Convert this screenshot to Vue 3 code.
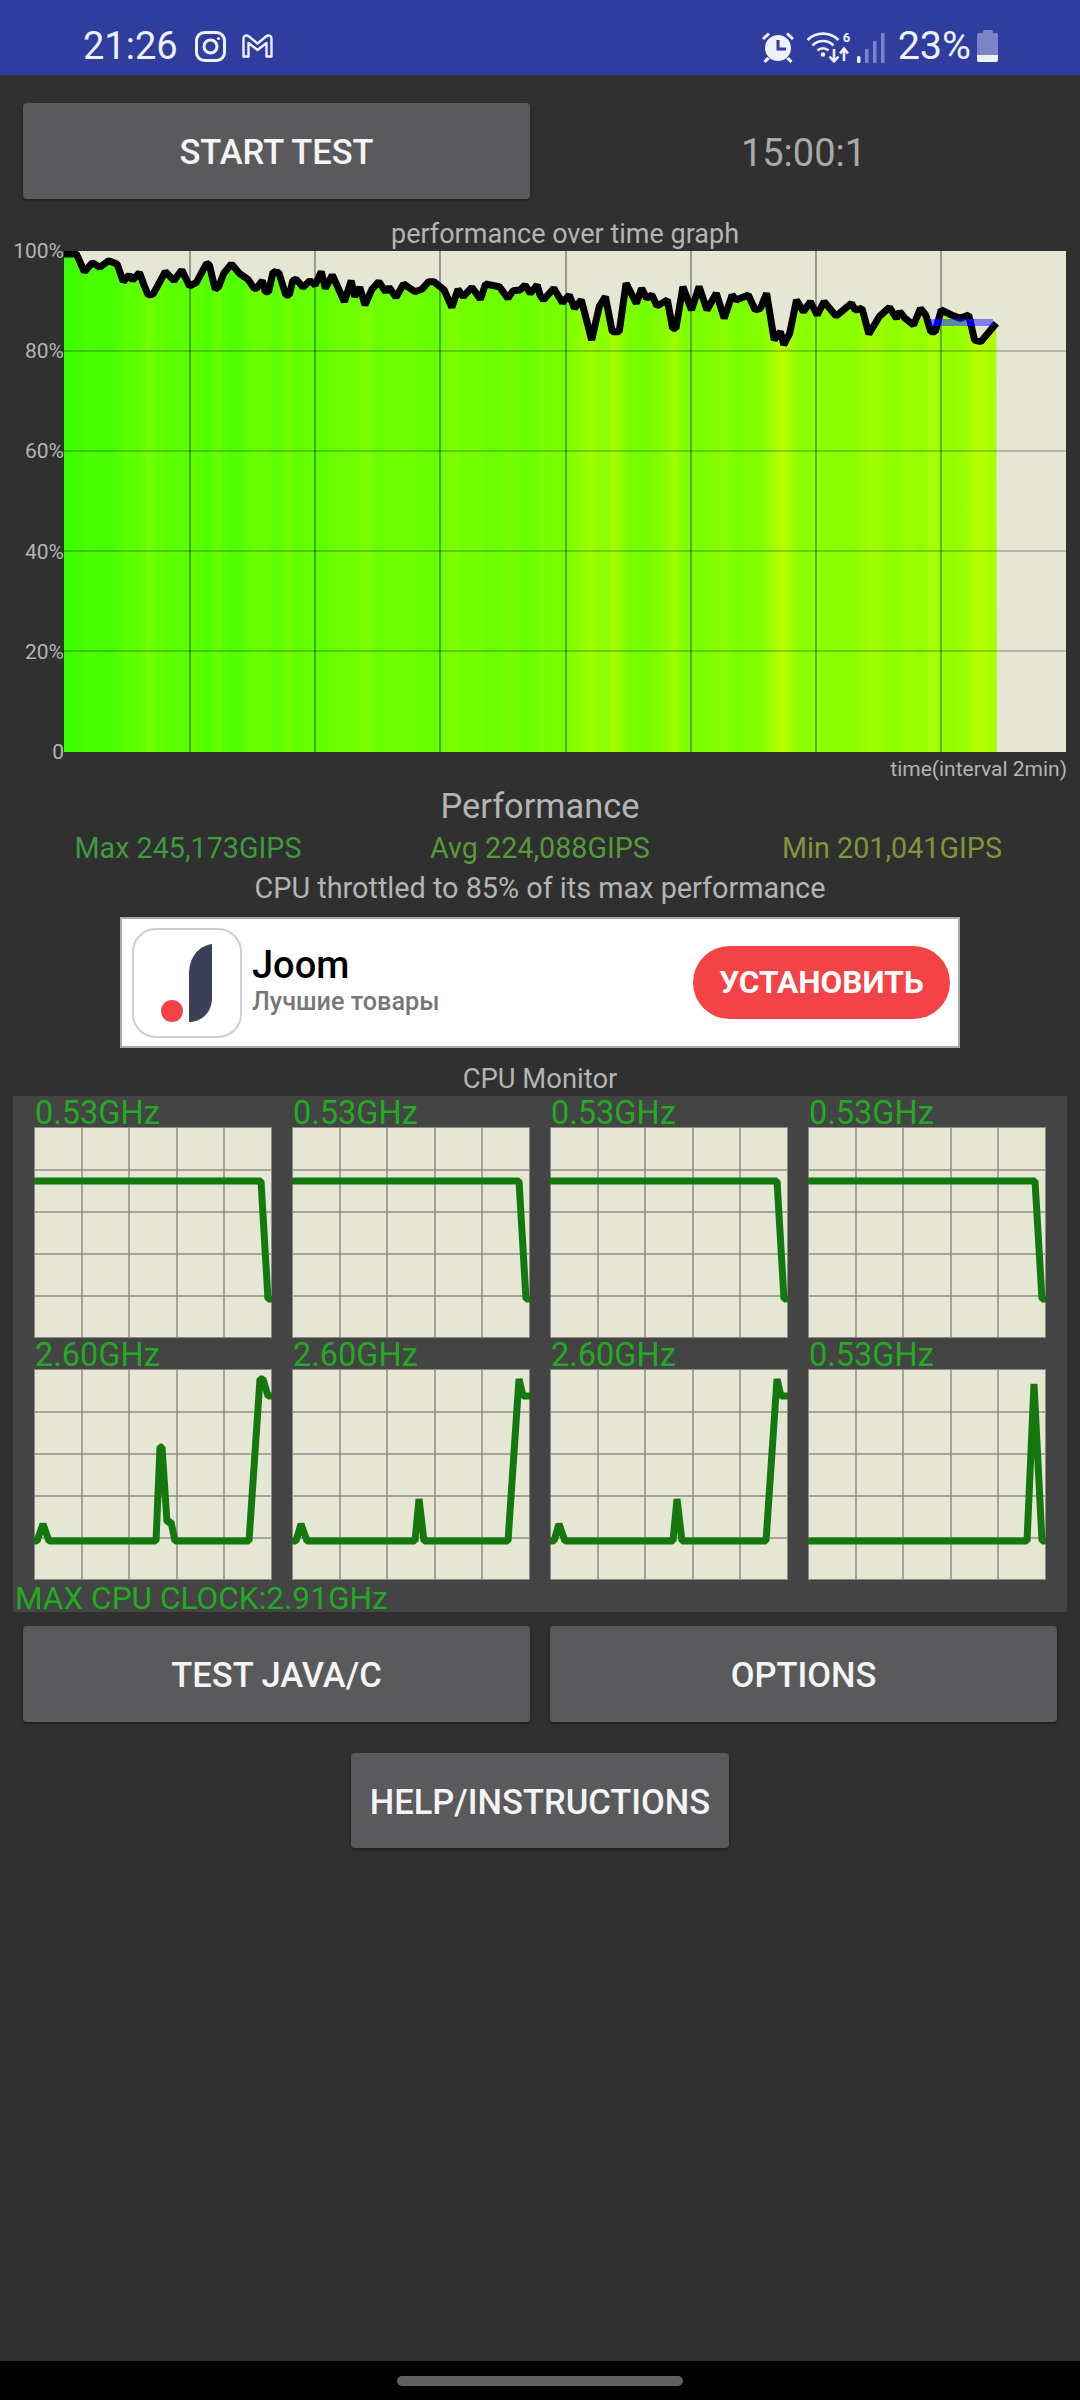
<script setup>
const leftPart = [[186,72],[222,72],[245,125],[268,98],[290,112],[315,92],[340,102],[358,155],[375,135],[385,150],[405,128],[420,170],[430,195],[445,192],[480,125],[505,152],[528,120],[550,168],[570,158],[600,100],[608,105],[625,178],[635,170],[650,130],[672,102],[695,130],[720,148],[738,175],[745,175],[762,152],[770,185],[780,185],[793,125],[810,128],[830,195],[840,195],[850,152],[860,148],[880,172],[900,152],[915,165],[933,125],[945,175],[965,135],[1000,215],[1020,152],[1030,200],[1045,172],[1060,225],[1080,178],[1100,155],[1120,185],[1130,172],[1150,202],[1172,162],[1205,185],[1225,178],[1245,155],[1260,155],[1290,180],[1312,232],[1330,178],[1345,200],[1370,172],[1395,208],[1410,162],[1450,170],[1475,205],[1490,182],[1510,180],[1525,165],[1540,190],[1560,165]]
const rightPart = [[0,195],[10,210],[40,175],[65,218],[85,195],[100,235],[120,210],[150,330],[172,230],[190,200],[210,305],[230,305],[250,160],[280,220],[295,175],[310,205],[325,195],[340,228],[370,210],[385,295],[395,295],[415,170],[440,240],[462,170],[485,240],[512,190],[535,265],[558,195],[570,210],[605,195],[625,240],[640,235],[658,190],[680,330],[698,305],[708,345],[725,310],[745,210],[765,245],[785,215],[805,255],[825,215],[860,258],[905,220],[915,240],[935,235],[955,312],[985,260],[1015,232],[1035,265],[1045,245],[1060,265],[1085,285],[1105,235],[1120,255],[1135,305],[1148,305],[1165,240],[1195,255],[1220,265],[1245,255],[1262,330],[1280,335],[1325,280]]

const perf = [
  ...leftPart.map(([x, y]) => [x / 2.904 - 64, y / 3 - 21]),
  ...rightPart.map(([x, y]) => [x / 2.904 + 476, y / 3 - 21])
]
const toPath = (pts) => pts.map(([x, y], i) => (i ? "L" : "M") + x.toFixed(1) + " " + y.toFixed(1)).join(" ")

const perfLine = toPath(perf)
const perfArea = perfLine + " L933 501 L0 501 Z"
// the lower the run drops, the yellower its band (partly averaged with neighbours, the bands are soft)
const bands = perf.map(([x, y], i) => {
  const prev = perf[Math.max(0, i - 1)][1]
  const next = perf[Math.min(perf.length - 1, i + 1)][1]
  const soft = (prev + 2 * y + next) / 4
  return {
    offset: (x / 933).toFixed(4),
    color: `rgb(${Math.round(Math.min(195, 52 + soft * 1.5))},255,0)`
  }
})

const gridX = [126, 251, 376, 502, 627, 752, 877]
const gridY = [100, 200, 300, 400]
const axisLabels = ["100%", "80%", "60%", "40%", "20%", "0"]

const flat = [[0,54],[227,54],[234,172],[238,172]]
const bigSpike = [[0,172],[3,172],[9,155],[15,172],[122,172],[126,78],[128,78],[133,153],[137,153],[141,172],[215,172],[226,10],[229,10],[234,27],[238,27]]
const smallSpike = [[0,172],[4,172],[9,155],[15,172],[123,172],[127,130],[132,172],[216,172],[227,10],[231,27],[238,27]]
const lateSpike = [[0,172],[219,172],[226,15],[234,172],[238,172]]

const cores = [
  { clock: "0.53GHz", d: toPath(flat) },
  { clock: "0.53GHz", d: toPath(flat) },
  { clock: "0.53GHz", d: toPath(flat) },
  { clock: "0.53GHz", d: toPath(flat) },
  { clock: "2.60GHz", d: toPath(bigSpike) },
  { clock: "2.60GHz", d: toPath(smallSpike) },
  { clock: "2.60GHz", d: toPath(smallSpike) },
  { clock: "0.53GHz", d: toPath(lateSpike) }
]
</script>

<template>
  <div class="app">
    <div class="status">
      <span class="status-time">21:26</span>
      <svg class="ic-insta" width="31" height="31" viewBox="0 0 31 31" fill="none" stroke="#eef0fa" stroke-width="3">
        <rect x="1.5" y="1.5" width="28" height="28" rx="8" />
        <circle cx="15.5" cy="15.5" r="6.5" />
        <circle cx="23.5" cy="7.5" r="1.6" fill="#eef0fa" stroke="none" />
      </svg>
      <svg class="ic-mail" width="31" height="24" viewBox="0 0 31 24" fill="none" stroke="#eef0fa" stroke-width="2.4" stroke-linejoin="round">
        <path d="M1.5 22.5V4.5C1.5 1.5 4.5 .5 7 2.5L15.5 9.5L24 2.5C26.5 .5 29.5 1.5 29.5 4.5V22.5H24.5V9L15.5 16L6.5 9V22.5Z" />
      </svg>
      <span class="status-gap"></span>
      <svg class="ic-alarm" width="34" height="32" viewBox="0 0 34 32" fill="#eef0fa">
        <circle cx="17" cy="17" r="13" />
        <path d="M1 7L7 1.5L9 3.5L3 9ZM33 7L27 1.5L25 3.5L31 9ZM6 26L2.5 30L4.500 32L9 28ZM28 26L31.500 30L29.500 32L25 28Z" />
        <path d="M15.500 9H18.500V16.500H25V19.500H15.500Z" fill="#2f3e9e" />
      </svg>
      <svg class="ic-wifi" width="46" height="32" viewBox="0 0 46 32" fill="none" stroke="#eef0fa" stroke-width="2.600">
        <path d="M1.500 9C10 .5 24 .5 32.500 9" />
        <path d="M6.500 14.500C12 8.500 22 8.500 27.500 14.500" />
        <path d="M11.500 19.500C14.500 16.500 19.500 16.500 22.500 19.500" />
        <circle cx="17" cy="23.500" r="2.300" fill="#eef0fa" stroke="none" />
        <path d="M28 18V30M23.500 25.500L28 30.500L32.500 25.500" />
        <path d="M38 30V18M34 22.500L38 17.500L42 22.500" />
      </svg>
      <span class="wifi-six">6</span>
      <svg class="ic-signal" width="28" height="30" viewBox="0 0 28 30">
        <rect x="0" y="23" width="3.500" height="7" rx="1.500" fill="#eef0fa" />
        <rect x="8" y="16" width="3.500" height="14" rx="1" fill="#7c83c6" />
        <rect x="16" y="8" width="3.500" height="22" rx="1" fill="#7c83c6" />
        <rect x="24" y="0" width="3.500" height="30" rx="1" fill="#7c83c6" />
      </svg>
      <span class="status-batt">23%</span>
      <div class="battery">
        <span class="battery-cap"></span>
        <span class="battery-body"><span class="battery-level"></span></span>
      </div>
    </div>

    <div class="top-row">
      <button class="btn btn-start">START TEST</button>
      <span class="timer">15:00:1</span>
    </div>

    <div class="graph-title">performance over time graph</div>
    <div class="graph-row">
      <div class="axis">
        <span v-for="label in axisLabels" :key="label" class="axis-label">{{ label }}</span>
      </div>
      <svg class="graph" width="1002" height="501" viewBox="0 0 1002 501">
        <defs>
          <linearGradient id="bands" gradientUnits="userSpaceOnUse" x1="0" y1="0" x2="933" y2="0">
            <stop v-for="b in bands" :key="b.offset" :offset="b.offset" :stop-color="b.color" />
          </linearGradient>
          <clipPath id="blueBar"><rect x="866" y="68" width="63" height="7" /></clipPath>
        </defs>
        <rect width="1002" height="501" fill="#e6e6d5" />
        <path :d="perfArea" fill="url(#bands)" />
        <line v-for="x in gridX" :key="x" :x1="x" :x2="x" y1="0" y2="501" stroke="#000" stroke-opacity=".55" stroke-width="1.200" />
        <line v-for="y in gridY" :key="y" :y1="y" :y2="y" x1="0" x2="1002" stroke="#000" stroke-opacity=".42" stroke-width="1.200" />
        <path :d="perfLine" fill="none" stroke="#000" stroke-width="7" stroke-linejoin="bevel" />
        <rect x="866" y="68" width="63" height="7" fill="#3c3cff" fill-opacity=".6" />
        <path :d="perfLine" fill="none" stroke="#0000e0" stroke-width="7" stroke-linejoin="bevel" clip-path="url(#blueBar)" />
      </svg>
    </div>
    <div class="graph-time">time(interval 2min)</div>

    <div class="perf-title">Performance</div>
    <div class="perf-stats">
      <span class="stat-max">Max 245,173GIPS</span>
      <span class="stat-avg">Avg 224,088GIPS</span>
      <span class="stat-min">Min 201,041GIPS</span>
    </div>
    <div class="throttle">CPU throttled to 85% of its max performance</div>

    <div class="ad">
      <div class="ad-icon">
        <svg width="106" height="106" viewBox="2 2 106 106">
          <path d="M80 16C66 18 57 30 57 46V94C70 94 80 84 80 70Z" fill="#3b3f58" />
          <circle cx="40" cy="83" r="11" fill="#f44346" />
        </svg>
      </div>
      <div class="ad-text">
        <div class="ad-name">Joom</div>
        <div class="ad-sub">Лучшие товары</div>
      </div>
      <div class="ad-btn">УСТАНОВИТЬ</div>
    </div>

    <div class="monitor-title">CPU Monitor</div>
    <div class="monitor">
      <div class="cores">
        <div v-for="(core, i) in cores" :key="i" class="core">
          <div class="core-clock">{{ core.clock }}</div>
          <svg class="core-chart" width="238" height="211" viewBox="0 0 238 211">
            <rect width="238" height="211" fill="#e6e6d5" />
            <line v-for="x in [48, 95, 143, 190]" :key="x" :x1="x" :x2="x" y1="0" y2="211" stroke="#8c8c84" stroke-width="1.500" />
            <line v-for="y in [43, 85, 127, 169]" :key="y" :y1="y" :y2="y" x1="0" x2="238" stroke="#8c8c84" stroke-width="1.500" />
            <rect x=".5" y=".5" width="237" height="210" fill="none" stroke="#8c8c84" />
            <path :d="core.d" fill="none" stroke="#15780e" stroke-width="7" stroke-linejoin="bevel" />
          </svg>
        </div>
      </div>
      <div class="max-clock">MAX CPU CLOCK:2.91GHz</div>
    </div>

    <div class="btn-row">
      <button class="btn btn-half">TEST JAVA/C</button>
      <button class="btn btn-half">OPTIONS</button>
    </div>
    <button class="btn btn-help">HELP/INSTRUCTIONS</button>

    <div class="navbar"><span class="nav-handle"></span></div>
  </div>
</template>

<style scoped>
.app {
  display: flex;
  flex-direction: column;
  width: 1080px;
  height: 2400px;
  background: #303030;
  font-family: Roboto, "Noto Sans CJK SC", sans-serif;
  color: #b4b4b4;
}

.status {
  display: flex;
  align-items: center;
  flex: none;
  height: 75px;
  padding: 22px 82px 0 83px;
  box-sizing: border-box;
  background: #2f3e9e;
  color: #eef0fa;
}
.status-time {
  width: 94px;
  font-size: 38px;
  line-height: 1;
  margin-top: -5px;
}
.ic-insta {
  margin: -4px 0 0 18px;
}
.ic-mail {
  margin: -6px 0 0 16px;
}
.status-gap {
  flex: 1;
}
.ic-alarm {
  margin-top: -4px;
}
.ic-wifi {
  margin: -4px 0 0 11px;
}
.wifi-six {
  width: 0;
  font-size: 13px;
  font-weight: 700;
  margin: -22px 0 0 -9px;
}
.ic-signal {
  margin: -2px 0 0 14px;
}
.status-batt {
  margin: -5px 0 0 13px;
  font-size: 39.500px;
  line-height: 1;
}
.battery {
  display: flex;
  flex-direction: column;
  align-items: center;
  margin: -5px 0 0 6px;
}
.battery-cap {
  width: 10px;
  height: 3px;
  background: #7c83c6;
  border-radius: 2px 2px 0 0;
}
.battery-body {
  display: flex;
  align-items: flex-end;
  width: 21px;
  height: 29px;
  background: #7c83c6;
  border-radius: 2px;
  overflow: hidden;
}
.battery-level {
  width: 100%;
  height: 7px;
  background: #eef0fa;
}

.btn {
  border: 0;
  border-radius: 4px;
  padding: 2px 0 0;
  background: #5a5a5c;
  color: #f4f4f4;
  font-family: Roboto, sans-serif;
  font-size: 34.5px;
  font-weight: 500;
  box-shadow: 0 2px 3px rgba(0, 0, 0, 0.35);
}
.top-row {
  display: flex;
  align-items: center;
  flex: none;
  gap: 20px;
  height: 96px;
  padding: 28px 23px 0;
}
.btn-start {
  flex: none;
  width: 507px;
  height: 96px;
}
.timer {
  flex: 1;
  padding-top: 3px;
  text-align: center;
  font-size: 38px;
  color: #aaa;
}

.graph-title {
  margin: 19px 0 0 64px;
  width: 1002px;
  height: 31px;
  line-height: 32px;
  text-align: center;
  font-size: 27px;
}
.graph-row {
  display: flex;
  flex: none;
  height: 501px;
  margin-top: 2px;
}
.axis {
  display: flex;
  flex-direction: column;
  justify-content: space-between;
  width: 64px;
}
.axis-label {
  height: 0;
  line-height: 0;
  text-align: right;
  font-size: 21px;
}
.graph {
  display: block;
}
.graph-time {
  margin-top: 4px;
  padding-right: 13px;
  height: 26px;
  line-height: 26px;
  text-align: right;
  font-size: 21px;
}

.perf-title {
  margin-top: 4px;
  height: 41px;
  line-height: 40px;
  text-align: center;
  font-size: 34.4px;
}
.perf-stats {
  display: grid;
  grid-template-columns: repeat(3, 352px);
  justify-content: center;
  height: 43.5px;
  line-height: 42px;
  text-align: center;
  font-size: 28.7px;
}
.stat-max {
  color: #3f9a3f;
}
.stat-avg {
  color: #559a38;
}
.stat-min {
  color: #7d973a;
}
.throttle {
  height: 36px;
  line-height: 34px;
  text-align: center;
  font-size: 28.8px;
}

.ad {
  display: flex;
  align-items: center;
  flex: none;
  box-sizing: border-box;
  width: 840px;
  height: 131px;
  margin: 10.5px 0 0 120px;
  padding: 0 8px 0 10px;
  border: 2px solid #aaa;
  background: #fff;
}
.ad-icon {
  flex: none;
  width: 110px;
  height: 110px;
  box-sizing: border-box;
  border: 2px solid #cdcdd2;
  border-radius: 24px;
}
.ad-icon svg {
  display: block;
}
.ad-text {
  flex: 1;
  margin: -4px 0 0 10px;
}
.ad-name {
  font-size: 38px;
  line-height: 42px;
  font-weight: 500;
  color: #000;
}
.ad-sub {
  margin-top: 1px;
  font-size: 25.200px;
  line-height: 30px;
  font-weight: 500;
  color: #777;
}
.ad-btn {
  flex: none;
  width: 257px;
  height: 73px;
  line-height: 73px;
  border-radius: 37px;
  background: #f44346;
  color: #fff;
  text-align: center;
  font-size: 31.600px;
  font-weight: 700;
}

.monitor-title {
  margin-top: 17px;
  height: 31px;
  line-height: 29px;
  text-align: center;
  font-size: 27.400px;
}
.monitor {
  flex: none;
  box-sizing: border-box;
  width: 1054px;
  height: 516px;
  margin-left: 13px;
  padding: 0 21px 0 21px;
  background: #444;
}
.cores {
  display: grid;
  grid-template-columns: repeat(4, 238px);
  column-gap: 20px;
}
.core-clock {
  height: 31px;
  line-height: 34px;
  padding-left: 1px;
  font-size: 32.500px;
  color: #22ab22;
}
.core-chart {
  display: block;
}
.max-clock {
  margin: 5px 0 0 -19px;
  height: 27px;
  line-height: 27px;
  white-space: nowrap;
  font-size: 31.600px;
  color: #22ab22;
}

.btn-row {
  display: flex;
  flex: none;
  gap: 20px;
  margin-top: 14px;
  padding: 0 23px;
}
.btn-half {
  flex: 1;
  height: 96px;
}
.btn-help {
  flex: none;
  align-self: center;
  width: 378px;
  height: 95px;
  margin-top: 31px;
}

.navbar {
  display: flex;
  align-items: center;
  justify-content: center;
  flex: none;
  height: 39px;
  margin-top: auto;
  background: #000;
}
.nav-handle {
  width: 286px;
  height: 10px;
  border-radius: 5px;
  background: #616161;
}
</style>

<style>
body {
  background: #303030;
}
</style>
